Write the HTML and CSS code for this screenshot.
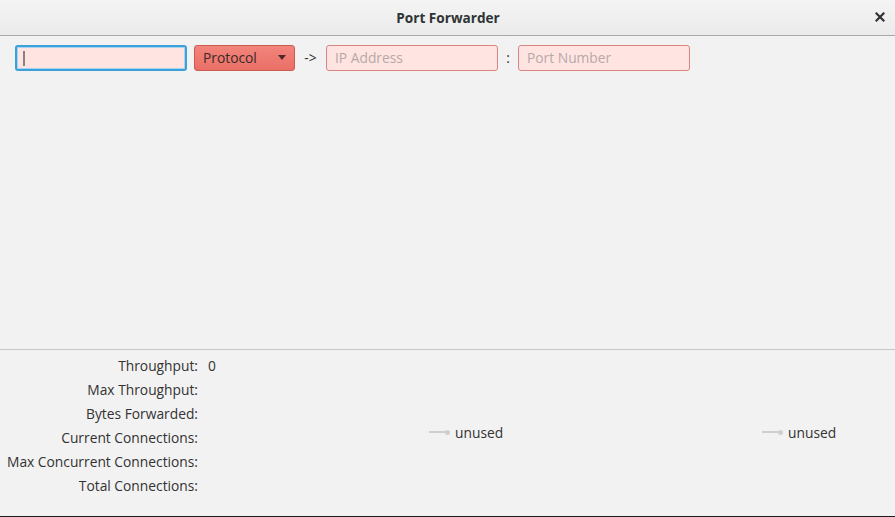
FILE: index.html
```html
<!DOCTYPE html>
<html>
<head>
<meta charset="utf-8">
<title>Port Forwarder</title>
<link rel="stylesheet" href="styles.css">
</head>
<body>
<div class="window">
  <header class="titlebar">
    <span class="title">Port Forwarder</span>
    <span class="close">
      <svg width="10" height="10" viewBox="0 0 10 10"><path d="M1.5 1.5 L8.5 8.5 M8.5 1.5 L1.5 8.5" stroke="#2e3436" stroke-width="2.2" stroke-linecap="square"/></svg>
    </span>
  </header>
  <main class="content">
    <div class="toolbar">
      <div class="field focused"><span class="caret"></span></div>
      <div class="combo"><span class="combo-text">Protocol</span><span class="combo-arrow"></span></div>
      <span class="sep arrow">-&gt;</span>
      <div class="field"><span class="placeholder">IP Address</span></div>
      <span class="sep colon">:</span>
      <div class="field"><span class="placeholder">Port Number</span></div>
    </div>
  </main>
  <section class="stats">
    <div class="stat-grid">
      <span class="label">Throughput:</span><span class="value">0</span>
      <span class="label">Max Throughput:</span><span class="value"></span>
      <span class="label">Bytes Forwarded:</span><span class="value"></span>
      <span class="label">Current Connections:</span><span class="value"></span>
      <span class="label">Max Concurrent Connections:</span><span class="value"></span>
      <span class="label">Total Connections:</span><span class="value"></span>
    </div>
    <div class="chart"><span class="legend-line"></span><span class="legend-dot"></span><span class="legend-text">unused</span></div>
    <div class="chart"><span class="legend-line"></span><span class="legend-dot"></span><span class="legend-text">unused</span></div>
  </section>
</div>
</body>
</html>
```

FILE: styles.css
```css
html, body {
  margin: 0;
  padding: 0;
}
body {
  width: 895px;
  height: 517px;
  overflow: hidden;
  background: #f2f2f2;
  font-family: "Open Sans", "Noto Sans", sans-serif;
  font-size: 13.8px;
  color: #333333;
}
.window {
  display: flex;
  flex-direction: column;
  height: 517px;
  box-sizing: border-box;
  border-bottom: 1px solid #1a1a1a;
}
.titlebar {
  position: relative;
  height: 35px;
  flex: none;
  display: flex;
  align-items: center;
  justify-content: center;
  background: linear-gradient(#f4f4f4, #ebebeb);
  border-bottom: 1px solid #a9a9a9;
}
.title {
  font-family: "Open Sans", sans-serif;
  font-weight: bold;
  font-size: 13.6px;
  color: #2e3436;
  margin-left: 1px;
}
.close {
  position: absolute;
  right: 10px;
  top: 12px;
  width: 10px;
  height: 10px;
  display: flex;
}
.content {
  flex: 1;
  border-bottom: 1px solid #c8c8c8;
}
.toolbar {
  display: flex;
  align-items: center;
  padding: 9px 0 0 15px;
  height: 26px;
}
.field {
  box-sizing: border-box;
  width: 172px;
  height: 26px;
  background: #ffe4e1;
  border: 1px solid #d8867f;
  border-radius: 3px;
  display: flex;
  align-items: center;
  padding-left: 8px;
  padding-bottom: 1px;
}
.field.focused {
  border: 2px solid #3aa1da;
  box-shadow: inset 0 0 0 1px #a7d4ee;
  padding-left: 6px;
  padding-bottom: 0;
}
.caret {
  width: 2px;
  height: 15px;
  background: #8a8282;
}
.placeholder {
  color: #b7a9a8;
}
.combo {
  box-sizing: border-box;
  width: 101px;
  height: 26px;
  margin-left: 7px;
  background: linear-gradient(#f2857c, #ea6f66);
  border: 1px solid #cd5b52;
  border-radius: 3px;
  display: flex;
  align-items: center;
  padding: 0 8px 1px 8px;
}
.combo-text {
  flex: 1;
  color: #3a2a28;
}
.combo-arrow {
  width: 0;
  height: 0;
  border-left: 4.5px solid transparent;
  border-right: 4.5px solid transparent;
  border-top: 5px solid #4a2a28;
}
.sep {
  color: #333333;
  text-align: center;
  padding-bottom: 1px;
}
.arrow {
  width: 31px;
}
.colon {
  width: 20px;
}
.stats {
  flex: none;
  height: 166px;
  display: grid;
  grid-template-columns: 429px 333px 1fr;
  align-items: center;
}
.stat-grid {
  align-self: start;
  margin-top: 3px;
  display: grid;
  grid-template-columns: 198px 40px;
  grid-auto-rows: 24px;
  column-gap: 10px;
  align-items: center;
}
.label {
  text-align: right;
  white-space: nowrap;
}
.chart {
  display: flex;
  align-items: center;
  padding-bottom: 2px;
}
.legend-line {
  width: 17px;
  height: 2px;
  background: #cfcfcf;
}
.legend-dot {
  width: 5px;
  height: 5px;
  border-radius: 50%;
  background: #cfcfcf;
  margin-left: -1px;
  margin-right: 5px;
}
.legend-text {
  color: #333333;
}
```
